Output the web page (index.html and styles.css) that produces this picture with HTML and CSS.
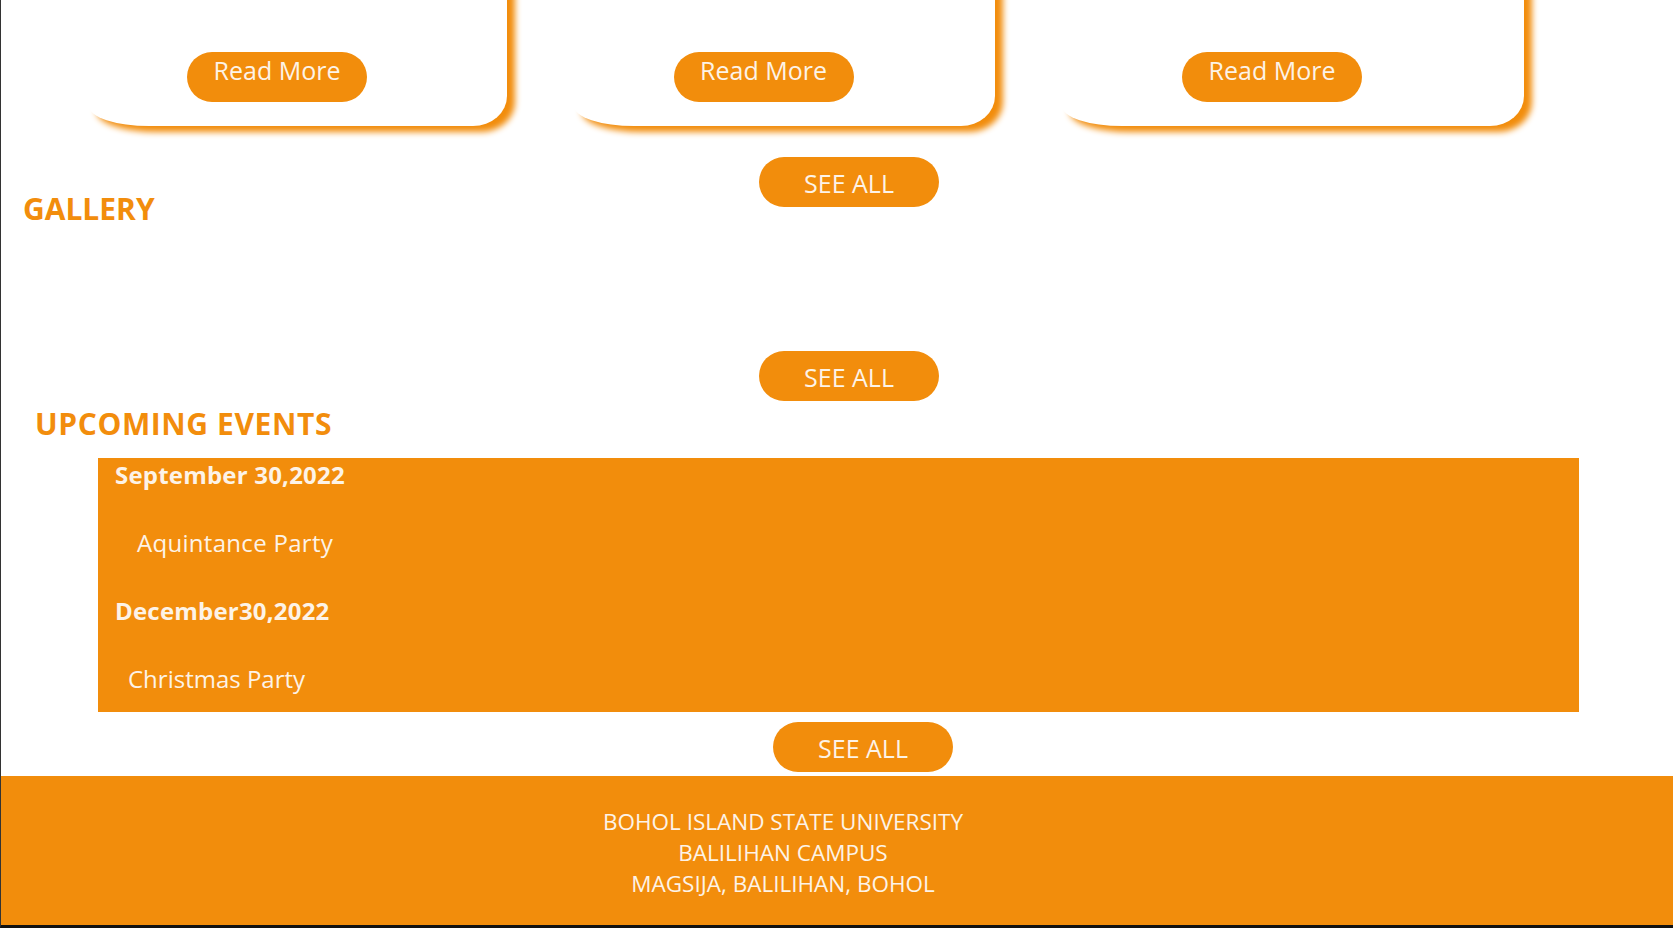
FILE: index.html
```html
<html>
<head>
	<title>BISU Balilihan</title>
	<link rel="stylesheet" href="styles.css">
</head>
<body>
	<div class="cards">
		<div class="card card-one"><button class="read-btn">Read More</button></div>
		<div class="card card-two"><button class="read-btn">Read More</button></div>
		<div class="card card-three"><button class="read-btn">Read More</button></div>
	</div>
	<div class="see-all-row first-row"><button class="see-all">SEE ALL</button></div>

	<h2 class="section-title gallery-title">GALLERY</h2>
	<div class="gallery"></div>
	<div class="see-all-row"><button class="see-all">SEE ALL</button></div>

	<h2 class="section-title events-title">UPCOMING EVENTS</h2>
	<div class="events">
		<h3 class="event-date">September 30,2022</h3>
		<p class="event-name">Aquintance Party</p>
		<h3 class="event-date">December30,2022</h3>
		<p class="event-name xmas">Christmas Party</p>
	</div>
	<div class="see-all-row events-row"><button class="see-all">SEE ALL</button></div>

	<footer>
		BOHOL ISLAND STATE UNIVERSITY<br>
		BALILIHAN CAMPUS<br>
		MAGSIJA, BALILIHAN, BOHOL
	</footer>
</body>
</html>
```
FILE: styles.css
```css
html{
	overflow: hidden;
}
body{
	margin: 0;
	background-color: #fff;
	font-family: "Open Sans", "Noto Sans", sans-serif;
	border-left: 1px solid #333;
	border-bottom: 3px solid #111;
}
.cards{
	display: flex;
	gap: 67px;
	padding-left: 88px;
	margin-top: -40px;
}
.card{
	height: 166px;
	box-sizing: border-box;
	background-color: #fff;
	display: flex;
	align-items: flex-end;
	justify-content: center;
	padding: 0 42px 24px 0;
	border-radius: 0 0 34px 60px / 0 0 30px 20px;
	box-shadow: 8px 6px 6px #f28d0c;
}
.card-one{
	width: 418px;
}
.card-two{
	width: 421px;
}
.card-three{
	width: 462px;
}
.read-btn{
	width: 180px;
	height: 50px;
	box-sizing: border-box;
	border: none;
	border-radius: 25px;
	background-color: #f28d0c;
	color: #fdf3e7;
	font-family: "Open Sans", sans-serif;
	font-size: 25px;
	line-height: 36px;
	padding: 0 0 14px;
	cursor: pointer;
}
.see-all-row{
	display: flex;
	justify-content: center;
	padding-left: 24px;
}
.first-row{
	margin-top: 31px;
}
.events-row{
	margin-top: 10px;
	padding-left: 52px;
}
.see-all{
	width: 180px;
	height: 50px;
	box-sizing: border-box;
	border: none;
	border-radius: 25px;
	background-color: #f28d0c;
	color: #fdf3e7;
	font-family: "Open Sans", sans-serif;
	font-size: 25px;
	line-height: 48px;
	padding: 2px 0 0;
	cursor: pointer;
}
.section-title{
	margin: 0;
	font-size: 30px;
	line-height: 40px;
	font-weight: 700;
	color: #f28d0c;
}
.gallery-title{
	margin-top: -18px;
	padding-left: 22px;
}
.gallery{
	height: 122px;
}
.events-title{
	margin-top: 3px;
	padding-left: 34px;
	letter-spacing: 0.6px;
}
.events{
	display: flex;
	flex-direction: column;
	gap: 34px;
	width: 1481px;
	box-sizing: border-box;
	margin: 14px 0 0 97px;
	padding: 0 0 16px 17px;
	background-color: #f28d0c;
	color: #fdf3e7;
}
.event-date{
	margin: 0;
	font-size: 24px;
	line-height: 33px;
	font-weight: 700;
	letter-spacing: 0.2px;
}
.event-name{
	margin: 0;
	font-size: 24px;
	line-height: 35px;
	padding-left: 22px;
	letter-spacing: 0.3px;
}
.xmas{
	padding-left: 13px;
	letter-spacing: 0;
}
footer{
	margin-top: 4px;
	padding: 30px 108px 26px 0;
	background-color: #f28d0c;
	color: #fdf3e7;
	text-align: center;
	font-size: 22.5px;
	line-height: 31px;
}
```
